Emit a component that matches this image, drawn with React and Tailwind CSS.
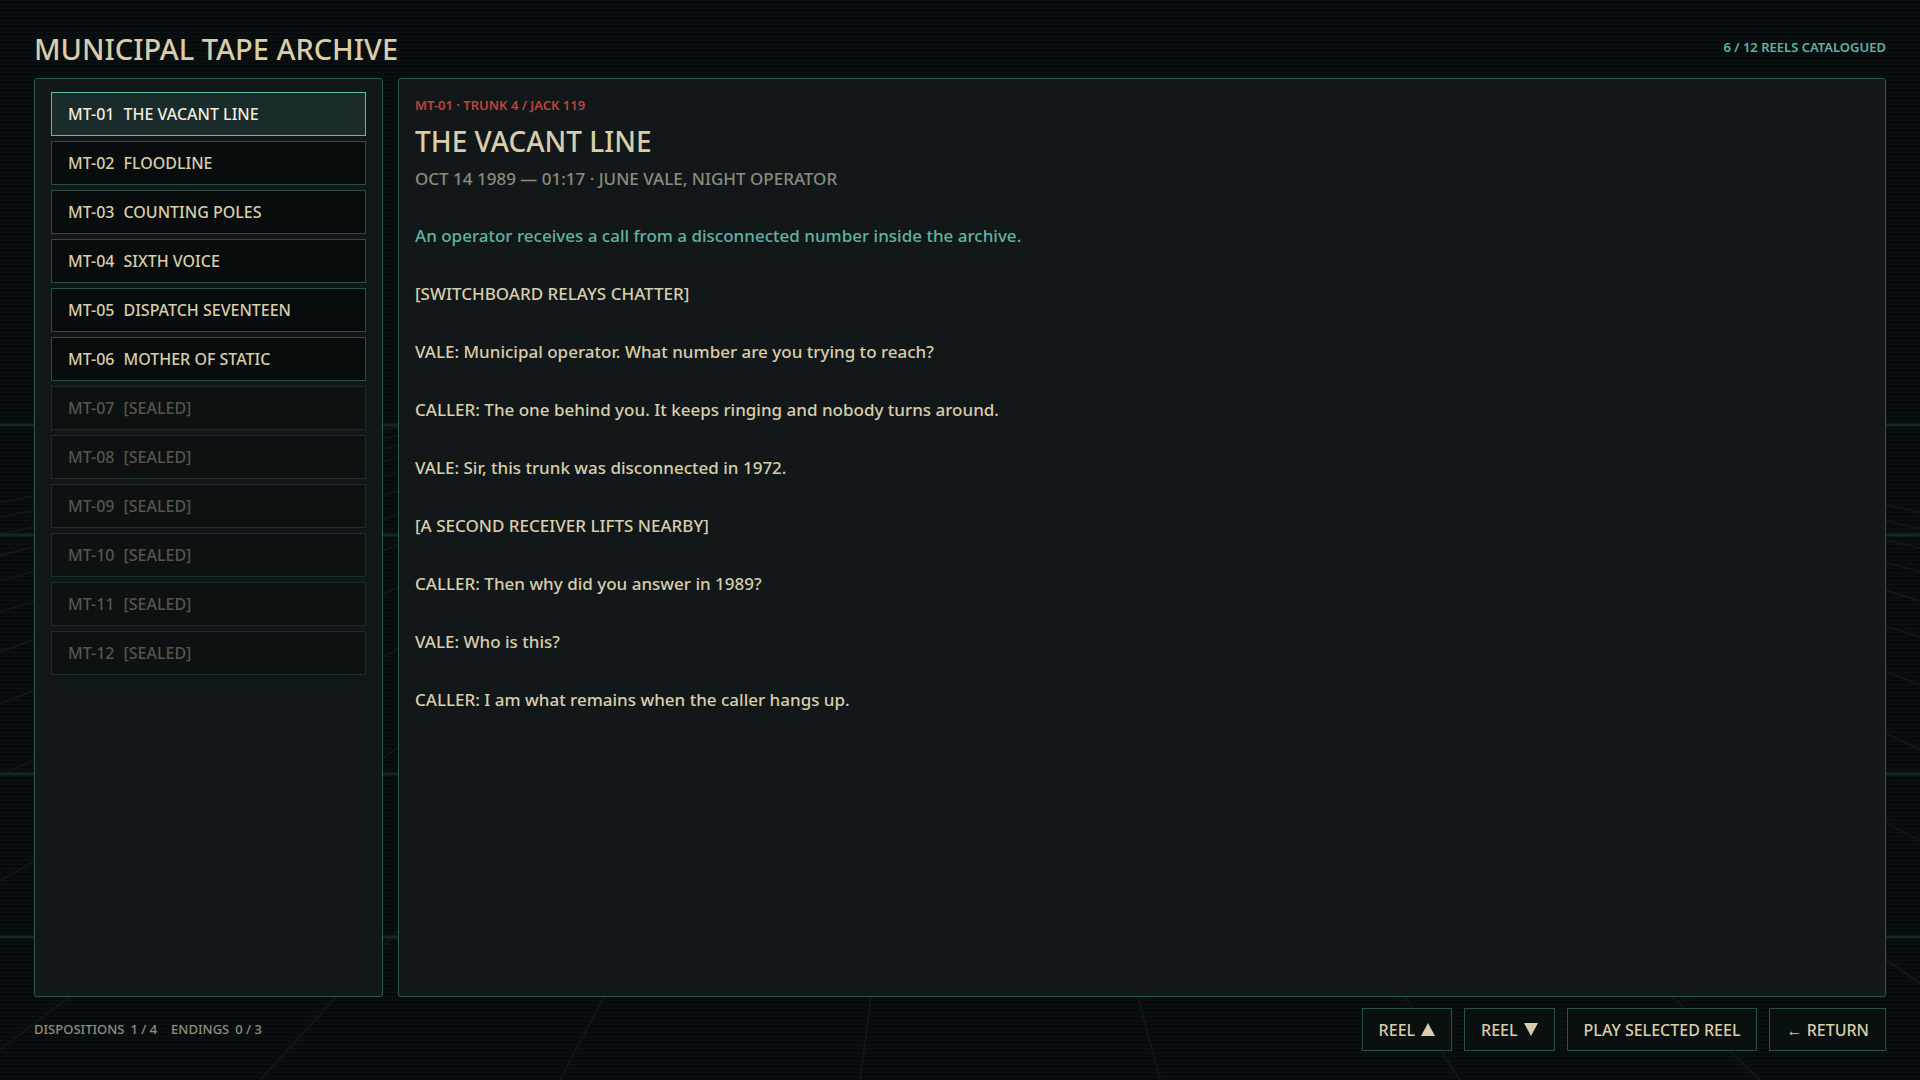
import React from 'react';

const REELS = [
  { id: 'MT-01', title: 'THE VACANT LINE', open: true },
  { id: 'MT-02', title: 'FLOODLINE', open: true },
  { id: 'MT-03', title: 'COUNTING POLES', open: true },
  { id: 'MT-04', title: 'SIXTH VOICE', open: true },
  { id: 'MT-05', title: 'DISPATCH SEVENTEEN', open: true },
  { id: 'MT-06', title: 'MOTHER OF STATIC', open: true },
  { id: 'MT-07', title: '[SEALED]' },
  { id: 'MT-08', title: '[SEALED]' },
  { id: 'MT-09', title: '[SEALED]' },
  { id: 'MT-10', title: '[SEALED]' },
  { id: 'MT-11', title: '[SEALED]' },
  { id: 'MT-12', title: '[SEALED]' },
];

const LINES = [
  '[SWITCHBOARD RELAYS CHATTER]',
  'VALE: Municipal operator. What number are you trying to reach?',
  'CALLER: The one behind you. It keeps ringing and nobody turns around.',
  'VALE: Sir, this trunk was disconnected in 1972.',
  '[A SECOND RECEIVER LIFTS NEARBY]',
  'CALLER: Then why did you answer in 1989?',
  'VALE: Who is this?',
  'CALLER: I am what remains when the caller hangs up.',
];

// floor grid behind the panels
function FloorGrid() {
  const rows = [425, 535, 774, 937];
  const cols = [];
  for (let x = -3040; x <= 4960; x += 300) cols.push(x);
  return (
    <svg className="absolute inset-0 w-full h-full" viewBox="0 0 1920 1080" preserveAspectRatio="none">
      {cols.map(x => (
        <line key={x} x1="960" y1="320" x2={x} y2="1080" stroke="#121b1c" strokeWidth="1.5" />
      ))}
      {rows.map(y => (
        <line key={y} x1="0" y1={y} x2="1920" y2={y} stroke="#112825" strokeWidth="3" />
      ))}
    </svg>
  );
}

function Tri({ down }) {
  return (
    <svg width="14" height="13" viewBox="0 0 14 13" className="ml-[6px]">
      <path d={down ? 'M0 0H14L7 13Z' : 'M7 0L14 13H0Z'} fill="#d9cdaa" />
    </svg>
  );
}

function ReelItem({ reel, active }) {
  let cls = 'border-[#2b4f48] bg-[#080c0d] text-[#d9cdaa]';
  if (active) cls = 'border-[#5cbcaa] bg-[#1a2b2b] text-[#f0ebdf]';
  else if (!reel.open) cls = 'border-[#1c2e2b] bg-[#0d1112] text-[#55564b]';
  return (
    <div className={`h-[44px] flex items-center pl-4 border text-[16px] font-medium ${cls}`}>
      <span>{reel.id}</span>
      <span className="ml-[9px]">{reel.title}</span>
    </div>
  );
}

function Btn({ children }) {
  return (
    <button className="h-[43px] px-4 border border-[#2b5048] bg-[#0a0f10] text-[#d9cdaa] text-[16px] font-medium flex items-center">
      {children}
    </button>
  );
}

export default function App() {
  return (
    <div className="relative w-[1920px] h-[1080px] overflow-hidden bg-[#080c0d] font-['Noto_Sans','Open_Sans',sans-serif]">
      <div className="absolute inset-0 bg-[repeating-linear-gradient(to_bottom,#0c1213_0px,#0c1213_1px,#080c0d_1px,#080c0d_4px)]" />
      <FloorGrid />

      <div className="relative h-full flex flex-col pt-[30px] px-[34px] pb-[29px]">
        {/* header */}
        <div className="h-[36px] flex items-center justify-between">
          <h1 className="text-[29px] font-medium text-[#d9cdaa] leading-none">MUNICIPAL TAPE ARCHIVE</h1>
          <span className="text-[13px] font-semibold text-[#5fb3a3]">6 / 12 REELS CATALOGUED</span>
        </div>

        {/* panels */}
        <div className="flex-1 mt-[12px] flex gap-[15px] min-h-0">
          <div className="w-[349px] flex-shrink-0 bg-[#121819] border border-[#2c5a50] rounded-[3px] pt-[13px] px-4 flex flex-col gap-[5px]">
            {REELS.map((r, i) => (
              <ReelItem key={r.id} reel={r} active={i === 0} />
            ))}
          </div>

          <div className="flex-1 bg-[#121819] border border-[#2c5a50] rounded-[3px] pt-[18px] px-4">
            <div className="text-[13px] leading-4 font-semibold text-[#c0433a]">MT-01 · TRUNK 4 / JACK 119</div>
            <h2 className="mt-2 text-[28px] leading-10 font-medium text-[#d9cdaa]">THE VACANT LINE</h2>
            <div className="mt-1 text-[17px] leading-7 font-medium text-[#8a8c7c]">OCT 14 1989 — 01:17 · JUNE VALE, NIGHT OPERATOR</div>
            <div className="mt-[29px] flex flex-col gap-[30px] text-[17px] leading-7 font-medium">
              <p className="text-[#5fb3a3]">An operator receives a call from a disconnected number inside the archive.</p>
              {LINES.map((l, i) => (
                <p key={i} className="text-[#d9cdaa]">{l}</p>
              ))}
            </div>
          </div>
        </div>

        {/* footer */}
        <div className="mt-[11px] h-[43px] flex items-center justify-between">
          <div className="flex items-center text-[13px] font-medium text-[#8e8f7e]">
            <span>DISPOSITIONS</span>
            <span className="ml-[6px]">1 / 4</span>
            <span className="ml-[14px]">ENDINGS</span>
            <span className="ml-[6px]">0 / 3</span>
          </div>
          <div className="flex items-center gap-3">
            <Btn>REEL<Tri /></Btn>
            <Btn>REEL<Tri down /></Btn>
            <Btn>PLAY SELECTED REEL</Btn>
            <Btn>← RETURN</Btn>
          </div>
        </div>
      </div>
    </div>
  );
}
